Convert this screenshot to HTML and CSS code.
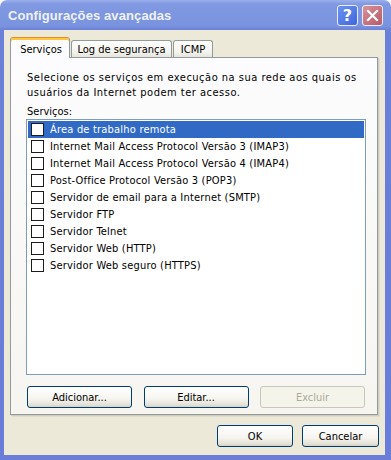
FILE: index.html
```html
<!DOCTYPE html>
<html lang="pt">
<head>
<meta charset="utf-8">
<title>Configurações avançadas</title>
<link rel="stylesheet" href="styles.css">
</head>
<body>
<div class="window">
  <div class="titlebar">
    <span class="title">Configurações avançadas</span>
    <div class="tb-buttons">
      <span class="tb-btn help">?</span>
      <span class="tb-btn close">
        <svg width="13" height="13" viewBox="0 0 13 13"><path d="M2 2 L11 11 M11 2 L2 11" stroke="#fff" stroke-width="2.2" stroke-linecap="square"/></svg>
      </span>
    </div>
  </div>
  <div class="client">
    <div class="tabs">
      <div class="tab selected t1">Serviços</div>
      <div class="tab t2">Log de segurança</div>
      <div class="tab t3">ICMP</div>
    </div>
    <div class="panel">
      <p class="desc">Selecione os serviços em execução na sua rede aos quais os usuários da Internet podem ter acesso.</p>
      <div class="label">Serviços:</div>
      <div class="listbox">
        <div class="row sel"><span class="cb"></span><span>Área de trabalho remota</span></div>
        <div class="row"><span class="cb"></span><span>Internet Mail Access Protocol Versão 3 (IMAP3)</span></div>
        <div class="row"><span class="cb"></span><span>Internet Mail Access Protocol Versão 4 (IMAP4)</span></div>
        <div class="row"><span class="cb"></span><span>Post-Office Protocol Versão 3 (POP3)</span></div>
        <div class="row"><span class="cb"></span><span>Servidor de email para a Internet (SMTP)</span></div>
        <div class="row"><span class="cb"></span><span>Servidor FTP</span></div>
        <div class="row"><span class="cb"></span><span>Servidor Telnet</span></div>
        <div class="row"><span class="cb"></span><span>Servidor Web (HTTP)</span></div>
        <div class="row"><span class="cb"></span><span>Servidor Web seguro (HTTPS)</span></div>
      </div>
      <div class="btnrow">
        <span class="btn">Adicionar...</span>
        <span class="btn">Editar...</span>
        <span class="btn disabled">Excluir</span>
      </div>
    </div>
    <div class="footer">
      <span class="btn ok">OK</span>
      <span class="btn cancel">Cancelar</span>
    </div>
  </div>
</div>
</body>
</html>
```
FILE: styles.css
```css
html, body {
  margin: 0;
  padding: 0;
  background: #ffffff;
}
body {
  font-family: "DejaVu Sans Condensed", "Liberation Sans", Arial, sans-serif;
  font-size: 11px;
  color: #000;
}
.window {
  width: 391px;
  height: 460px;
  box-sizing: border-box;
  display: flex;
  flex-direction: column;
  border-radius: 7px 7px 0 0;
  background: linear-gradient(to bottom, #9bb0ec 0, #8199e2 4px, #7a93de 26px, #6b80d9 30px, #6a7dd8 100%);
}
.titlebar {
  height: 30px;
  display: flex;
  align-items: center;
  justify-content: space-between;
  padding: 0 8px 0 8px;
  box-sizing: border-box;
}
.title {
  font-family: "Liberation Sans", Arial, sans-serif;
  font-weight: bold;
  font-size: 13px;
  color: #eef1fb;
  letter-spacing: 0.1px;
  padding-top: 1px;
}
.tb-buttons {
  display: flex;
  gap: 4px;
}
.tb-btn {
  width: 21px;
  height: 21px;
  box-sizing: border-box;
  border: 1px solid #e8edfb;
  border-radius: 3px;
  display: flex;
  align-items: center;
  justify-content: center;
}
.help {
  background: linear-gradient(135deg, #6f92ef, #3e66dd);
  color: #fff;
  font-weight: bold;
  font-size: 16px;
  font-family: "DejaVu Sans", sans-serif;
}
.close {
  background: linear-gradient(135deg, #d8929a, #b85a66);
}
.client {
  flex: 1;
  margin: 0 6px 5px 4px;
  background: #ece9d8;
  display: flex;
  flex-direction: column;
}
.tabs {
  display: flex;
  align-items: flex-end;
  height: 21px;
  margin: 7px 0 0 6px;
}
.tab {
  box-sizing: border-box;
  height: 17px;
  margin-bottom: 1px;
  border: 1px solid #919b9c;
  border-bottom: none;
  border-radius: 3px 3px 0 0;
  background: linear-gradient(#ffffff, #f3f2ec 70%, #e6e4dc);
  display: flex;
  align-items: center;
  justify-content: center;
  padding-top: 1px;
  white-space: nowrap;
}
.tab.selected {
  height: 21px;
  margin-bottom: 0;
  background: #fcfcfe;
  border-top: 1px solid #e68b2c;
  box-shadow: inset 0 2px 0 #ffc73c;
  padding-top: 2px;
  position: relative;
  z-index: 2;
}
.t1 { width: 60px; padding-left: 2px; }
.t2 { width: 101px; margin-left: 1px; }
.t3 { width: 40px; margin-left: 1px; }
.panel {
  margin: -1px 7px 0 6px;
  height: 358px;
  box-sizing: border-box;
  border: 1px solid #919b9c;
  background: linear-gradient(#fcfcfe, #f6f5f0);
  box-shadow: 1px 1px 0 #d0cdbf, 2px 2px 0 #e0ddd0;
  padding: 12px 11px 0 15px;
}
.desc {
  margin: 0 0 4px 1px;
  line-height: 15px;
  width: 345px;
  letter-spacing: 0.5px;
}
.label {
  line-height: 15px;
  margin-left: 1px;
}
.listbox {
  height: 256px;
  width: 340px;
  box-sizing: border-box;
  border: 1px solid #7f9db9;
  background: #fff;
  padding: 1px;
}
.row {
  height: 17px;
  display: flex;
  align-items: center;
  gap: 6px;
  padding-left: 3px;
  white-space: nowrap;
  letter-spacing: 0.2px;
}
.row.sel {
  background: #316ac5;
  color: #fff;
}
.cb {
  width: 13px;
  height: 13px;
  box-sizing: border-box;
  border: 1px solid #1c1c1c;
  background: #fff;
  flex: none;
}
.btnrow {
  display: flex;
  justify-content: space-between;
  margin: 11px 1px 0 1px;
}
.btn {
  box-sizing: border-box;
  width: 105px;
  height: 22px;
  border: 1px solid #003c74;
  border-radius: 3px;
  background: linear-gradient(#ffffff, #f5f4ef 60%, #e3e0d4 90%, #d6d0c5);
  display: flex;
  align-items: center;
  justify-content: center;
}
.btn.disabled {
  border-color: #c9c7ba;
  background: #f5f4ea;
  color: #aca899;
}
.footer {
  display: flex;
  justify-content: flex-end;
  gap: 9px;
  margin: 10px 6px 0 0;
}
.btn.ok { width: 76px; }
.btn.cancel { width: 77px; }
```
